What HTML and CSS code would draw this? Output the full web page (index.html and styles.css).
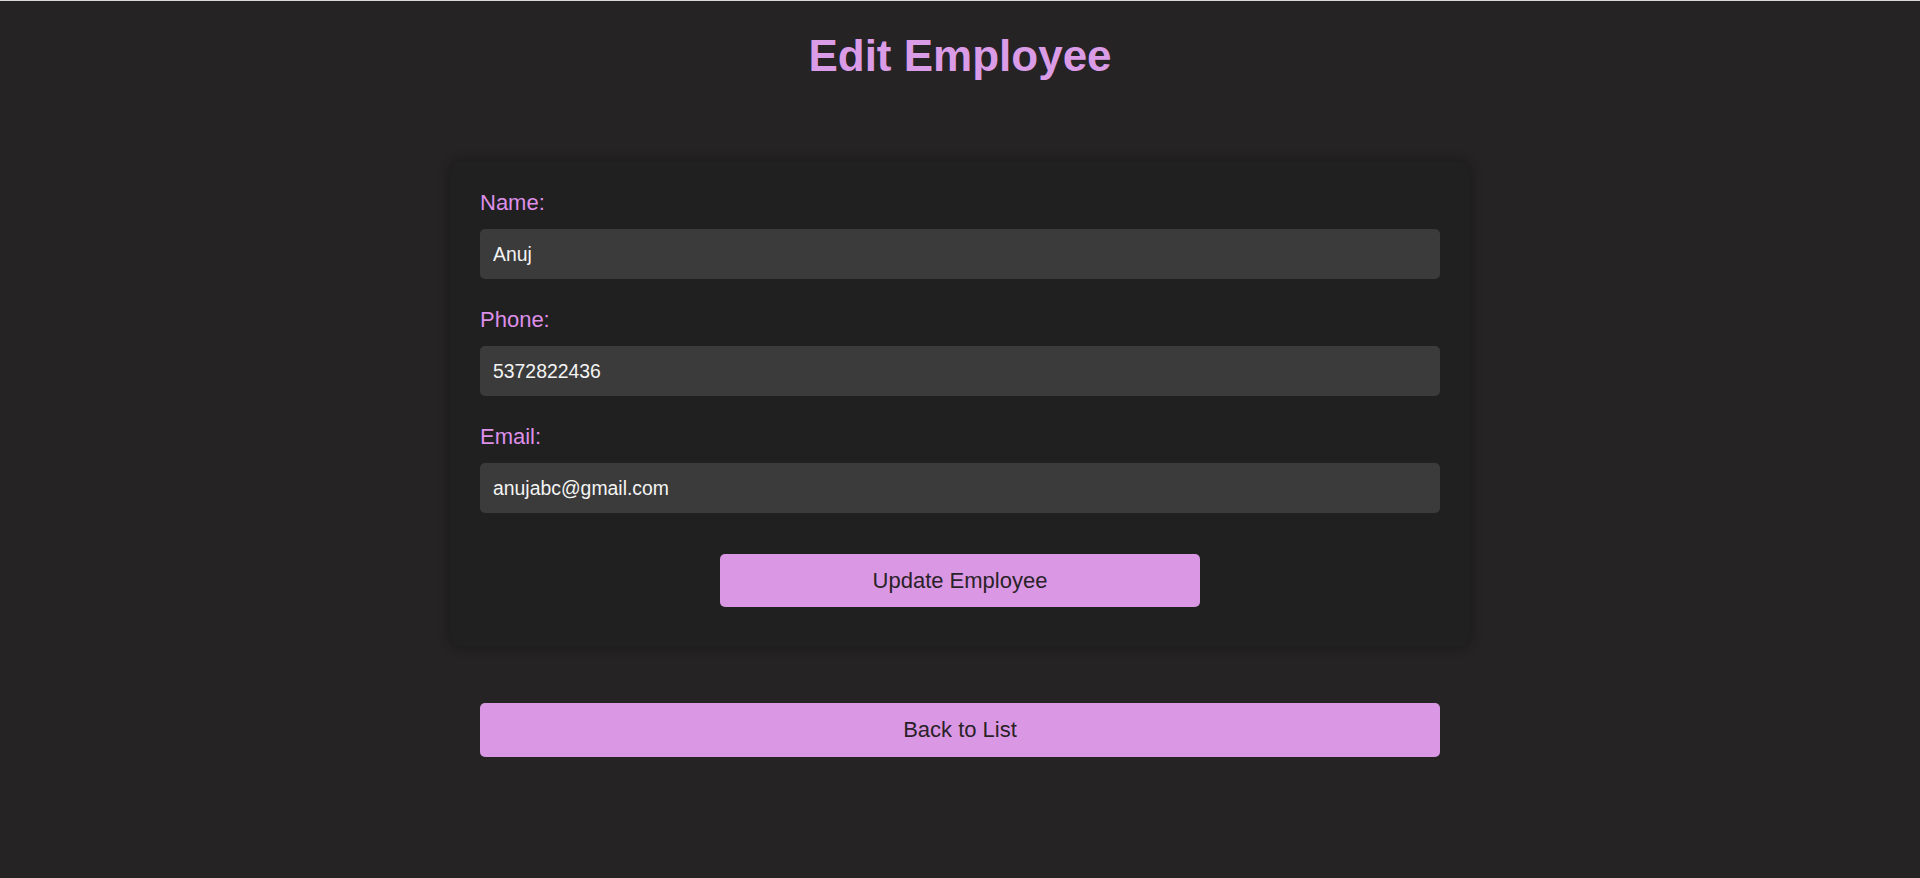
FILE: index.html
```html
<!DOCTYPE html>
<html lang="en">
<head>
<meta charset="utf-8">
<title>Edit Employee</title>
<link rel="stylesheet" href="styles.css">
</head>
<body>
  <h1 class="page-title">Edit Employee</h1>
  <main class="page">
    <form class="card">
      <div class="field">
        <label class="field-label" for="name">Name:</label>
        <input class="field-input" id="name" type="text" value="Anuj">
      </div>
      <div class="field">
        <label class="field-label" for="phone">Phone:</label>
        <input class="field-input" id="phone" type="text" value="5372822436">
      </div>
      <div class="field">
        <label class="field-label" for="email">Email:</label>
        <input class="field-input" id="email" type="text" value="anujabc@gmail.com">
      </div>
      <div class="actions">
        <button class="btn btn-update" type="button">Update Employee</button>
      </div>
    </form>
    <a class="btn btn-back" href="#">Back to List</a>
  </main>
</body>
</html>
```

FILE: styles.css
```css
html {
  border-top: 1px solid #d9d9d9;
  background: #252324;
}

body {
  margin: 0;
  background: #252324;
  font-family: "Liberation Sans", Arial, sans-serif;
  min-height: 877px;
}

.page-title {
  margin: 29px 0 0;
  text-align: center;
  font-size: 44px;
  font-weight: bold;
  color: #da9ce6;
  line-height: 51px;
}

.page {
  padding-top: 80px;
}

.card {
  box-sizing: content-box;
  max-width: 960px;
  margin: 0 auto;
  padding: 30px 30px 40px;
  background: #202020;
  border-radius: 10px;
  box-shadow: 0 0 12px rgba(0, 0, 0, 0.35);
}

.field {
  margin-bottom: 29px;
}

.field-label {
  display: block;
  margin-bottom: 14px;
  font-size: 22px;
  line-height: 24px;
  color: #de8fe9;
}

.field-input {
  display: block;
  box-sizing: border-box;
  width: 100%;
  height: 50px;
  padding: 0 13px;
  border: none;
  border-radius: 5px;
  background: #3b3b3b;
  color: #f4f4f4;
  font-family: "Liberation Sans", Arial, sans-serif;
  font-size: 19.4px;
  outline: none;
}

.actions {
  display: flex;
  justify-content: center;
  padding-top: 12px;
}

.btn {
  display: block;
  box-sizing: border-box;
  height: 53px;
  padding: 14px 0;
  border: none;
  border-radius: 5px;
  background: #da98e4;
  color: #2a2228;
  font-family: "Liberation Sans", Arial, sans-serif;
  font-size: 22px;
  line-height: 25px;
  text-align: center;
  text-decoration: none;
  cursor: pointer;
}

.btn-update {
  width: 480px;
}

.btn-back {
  max-width: 960px;
  height: 54px;
  margin: 56px auto 0;
}
```
